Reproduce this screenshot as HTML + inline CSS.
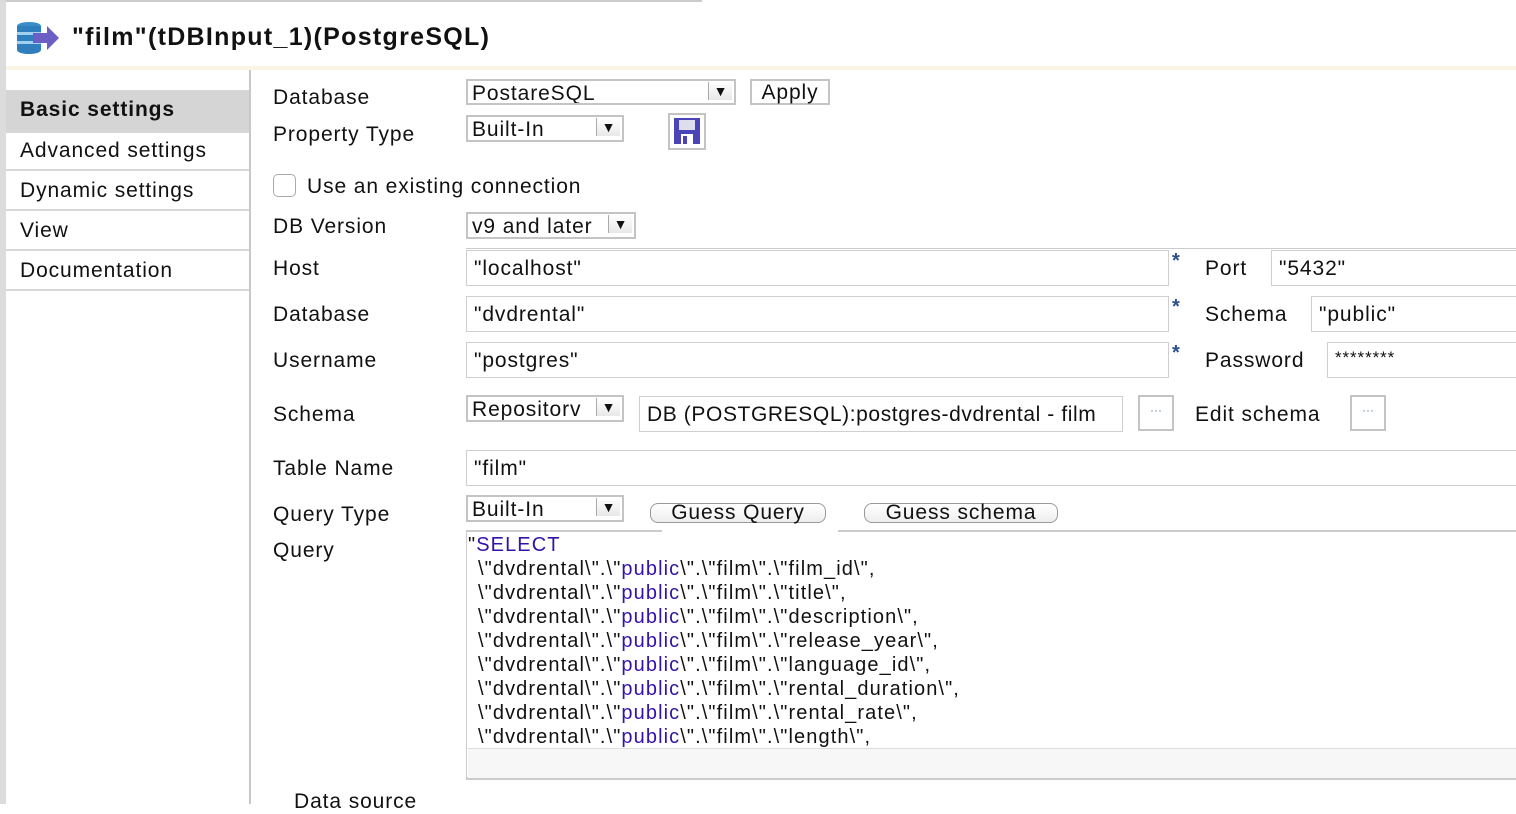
<!DOCTYPE html>
<html><head><meta charset="utf-8"><style>
*{margin:0;padding:0;box-sizing:border-box}
body{width:1516px;height:804px;overflow:hidden;background:#fff;font-family:"Liberation Sans",sans-serif;color:#111;position:relative;letter-spacing:0.9px}
.a{position:absolute;white-space:nowrap}
.t{font-size:21px;line-height:24px}
.sel{position:absolute;border:2px solid #c4c4c4;background:#fff;font-size:21px;line-height:26px;padding-left:4px;overflow:hidden}
.sel .ar{position:absolute;right:2px;top:1px;width:24px;height:18px;background:linear-gradient(#fff,#e8e8e8);border-left:1px solid #aaa;font-size:14px;text-align:center;line-height:18px;letter-spacing:0}
.inp{position:absolute;border:1.5px solid #cfcfcf;background:#fff;font-size:21px;line-height:35px;padding-left:7px}
.star{position:absolute;color:#2a4f8a;font-size:20px;font-weight:bold}
.side{position:absolute;left:6px;width:244px;height:40px;border-bottom:2px solid #d8d8d8;font-size:21px;line-height:40px;padding-left:14px}
.btn{position:absolute;border:1.5px solid #999;border-radius:8px;background:linear-gradient(#fff,#eee);font-size:21px;line-height:18px;text-align:center}
.q{position:absolute;left:478px;font-size:20px;line-height:24px;white-space:pre;letter-spacing:1.1px}
.q b{font-weight:normal;color:#3311aa}
.dots{position:absolute;width:36px;height:36px;border:2px solid #c4c4c4;color:#6688aa;font-size:12px;text-align:center;line-height:26px;letter-spacing:0}
</style></head><body>
<div class="a" style="left:0;top:0;width:702px;height:2px;background:#ccc"></div>
<div class="a" style="left:0;top:0;width:6px;height:804px;background:#dcdcdc"></div>
<div class="a" style="left:6px;top:66px;width:1510px;height:4px;background:#fbf5e8"></div>
<svg class="a" style="left:15px;top:20px" width="46" height="38" viewBox="0 0 46 38">
<ellipse cx="14" cy="6" rx="12" ry="4" fill="#3a8ec8"/>
<rect x="2" y="6" width="24" height="24" fill="#2f7fbf"/>
<rect x="2" y="12" width="24" height="3" fill="#9fd0f0"/><rect x="2" y="21" width="24" height="3" fill="#9fd0f0"/>
<ellipse cx="14" cy="30" rx="12" ry="4" fill="#2f7fbf"/>
<path d="M18 13h14v-7l12 12-12 12v-7h-14z" fill="#6b5fc6"/>
</svg>
<div class="a" style="left:72px;top:22px;font-size:25px;font-weight:bold;line-height:30px;letter-spacing:1.3px">"film"(tDBInput_1)(PostgreSQL)</div>

<div class="a" style="left:6px;top:90px;width:244px;height:41px;background:#d5d5d5"></div>
<div class="side" style="top:90px;font-weight:bold;border-bottom:none;height:41px">Basic settings</div>
<div class="a" style="left:6px;top:131px;width:244px;height:2px;background:#d8d8d8"></div>
<div class="side" style="top:131px">Advanced settings</div>
<div class="side" style="top:171px">Dynamic settings</div>
<div class="side" style="top:211px">View</div>
<div class="side" style="top:251px">Documentation</div>
<div class="a" style="left:249px;top:70px;width:2px;height:734px;background:#c8c8c8"></div>

<div class="a t" style="left:273px;top:86px">Database</div>
<div class="a t" style="left:273px;top:123px">Property Type</div>
<div class="a t" style="left:307px;top:175px">Use an existing connection</div>
<div class="a" style="left:273px;top:174px;width:23px;height:23px;border:1.5px solid #aaa;border-radius:5px"></div>
<div class="a t" style="left:273px;top:215px">DB Version</div>
<div class="a t" style="left:273px;top:257px">Host</div>
<div class="a t" style="left:273px;top:303px">Database</div>
<div class="a t" style="left:273px;top:349px">Username</div>
<div class="a t" style="left:273px;top:403px">Schema</div>
<div class="a t" style="left:273px;top:457px">Table Name</div>
<div class="a t" style="left:273px;top:503px">Query Type</div>
<div class="a t" style="left:273px;top:539px">Query</div>
<div class="a t" style="left:294px;top:790px">Data source</div>

<div class="sel" style="left:466px;top:79px;width:270px;height:26px">PostareSQL<span class="ar">▼</span></div>
<div class="a" style="left:750px;top:79px;width:80px;height:26px;border:2px solid #c4c4c4;font-size:21px;line-height:24px;text-align:center">Apply</div>
<div class="sel" style="left:466px;top:115px;width:158px;height:27px">Built-In<span class="ar">▼</span></div>
<div class="a" style="left:668px;top:113px;width:38px;height:37px;border:2px solid #c4c4c4"></div>
<svg class="a" style="left:674px;top:118px" width="26" height="26" viewBox="0 0 26 26"><rect x="0" y="0" width="26" height="26" fill="#4b44b8"/><rect x="5" y="2" width="16" height="10" fill="#dde"/><rect x="7" y="16" width="12" height="10" fill="#fff"/><rect x="9" y="18" width="4" height="8" fill="#4b44b8"/></svg>
<div class="sel" style="left:466px;top:212px;width:170px;height:27px">v9 and later<span class="ar">▼</span></div>
<div class="a" style="left:466px;top:248px;width:1050px;height:1px;background:#ccc"></div>

<div class="inp" style="left:466px;top:250px;width:703px;height:36px">"localhost"</div>
<div class="star" style="left:1172px;top:250px">*</div>
<div class="a t" style="left:1205px;top:257px">Port</div>
<div class="inp" style="left:1271px;top:250px;width:260px;height:36px">"5432"</div>
<div class="inp" style="left:466px;top:296px;width:703px;height:36px">"dvdrental"</div>
<div class="star" style="left:1172px;top:296px">*</div>
<div class="a t" style="left:1205px;top:303px">Schema</div>
<div class="inp" style="left:1311px;top:296px;width:220px;height:36px">"public"</div>
<div class="inp" style="left:466px;top:342px;width:703px;height:36px">"postgres"</div>
<div class="star" style="left:1172px;top:342px">*</div>
<div class="a t" style="left:1205px;top:349px">Password</div>
<div class="inp" style="left:1327px;top:342px;width:200px;height:36px;font-size:17px;line-height:30px">********</div>

<div class="sel" style="left:466px;top:395px;width:158px;height:27px">Repositorv<span class="ar">▼</span></div>
<div class="inp" style="left:639px;top:396px;width:484px;height:36px;line-height:36px;letter-spacing:0.6px">DB (POSTGRESQL):postgres-dvdrental - film</div>
<div class="dots" style="left:1138px;top:395px">···</div>
<div class="a t" style="left:1195px;top:403px">Edit schema</div>
<div class="dots" style="left:1350px;top:395px">···</div>

<div class="inp" style="left:466px;top:450px;width:1060px;height:36px">"film"</div>
<div class="sel" style="left:466px;top:495px;width:158px;height:27px">Built-In<span class="ar">▼</span></div>
<div class="btn" style="left:650px;top:503px;width:176px;height:20px">Guess Query</div>
<div class="btn" style="left:864px;top:503px;width:194px;height:20px">Guess schema</div>
<div class="a" style="left:466px;top:530px;width:196px;height:1.5px;background:#ccc"></div>
<div class="a" style="left:838px;top:530px;width:678px;height:1.5px;background:#ccc"></div>

<div class="a" style="left:466px;top:531px;width:1060px;height:249px;border-left:1.5px solid #ccc;border-bottom:3px solid #ccc"></div>
<div class="a" style="left:468px;top:748px;width:1060px;height:30px;background:#f7f7f7;border-top:1.5px solid #ddd"></div>
<div class="q" style="left:468px;top:533px">"<b>SELECT</b></div>
<div class="q" style="top:557px">\"dvdrental\".\"<b>public</b>\".\"film\".\"film_id\",
\"dvdrental\".\"<b>public</b>\".\"film\".\"title\",
\"dvdrental\".\"<b>public</b>\".\"film\".\"description\",
\"dvdrental\".\"<b>public</b>\".\"film\".\"release_year\",
\"dvdrental\".\"<b>public</b>\".\"film\".\"language_id\",
\"dvdrental\".\"<b>public</b>\".\"film\".\"rental_duration\",
\"dvdrental\".\"<b>public</b>\".\"film\".\"rental_rate\",
\"dvdrental\".\"<b>public</b>\".\"film\".\"length\",</div>
</body></html>
